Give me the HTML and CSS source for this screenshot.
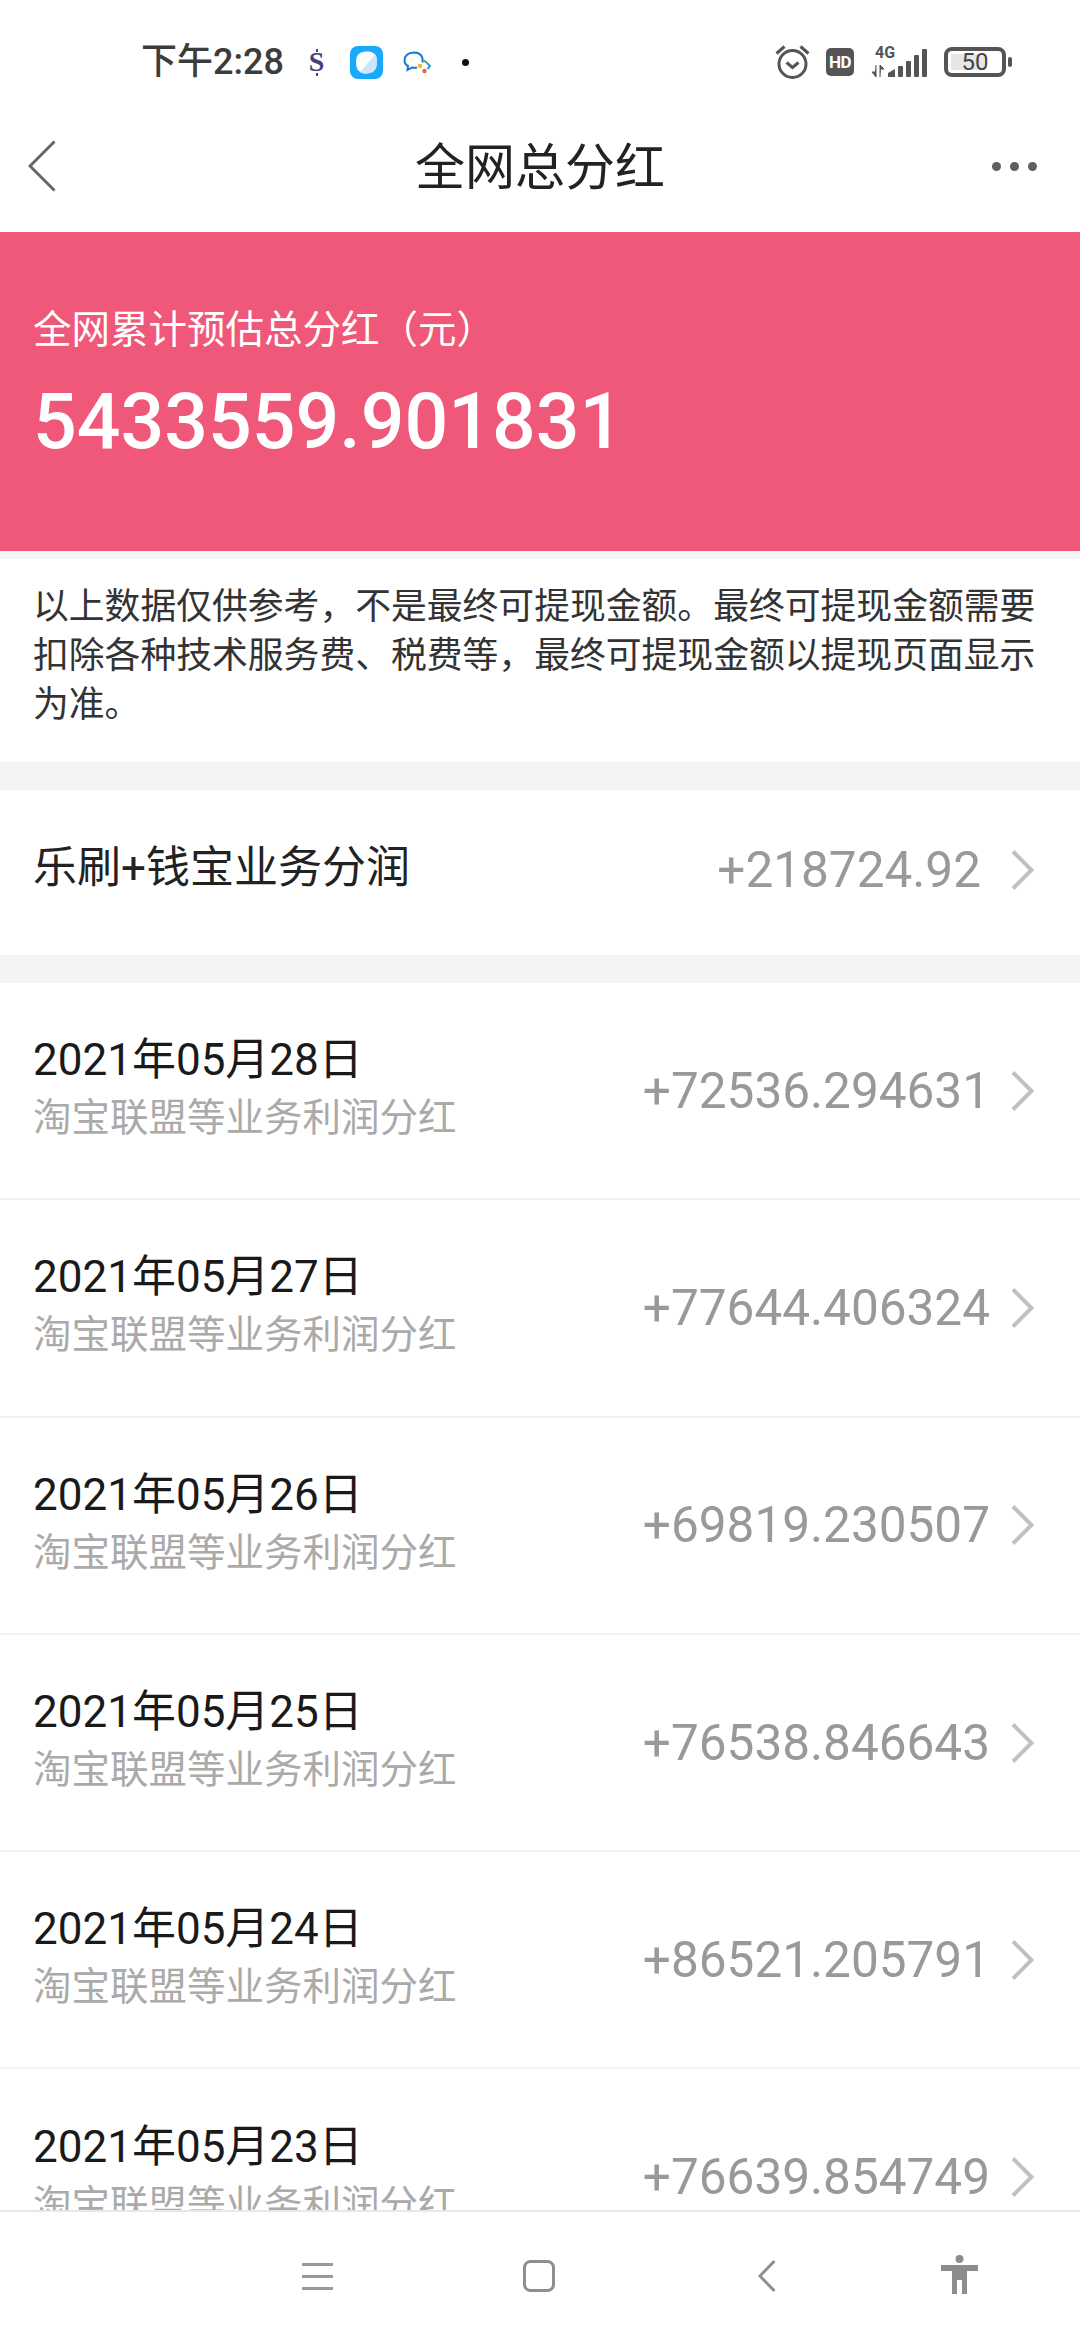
FILE: index.html
```html
<!DOCTYPE html>
<html lang="zh-CN">
<head>
<meta charset="utf-8">
<title>全网总分红</title>
<link rel="stylesheet" href="styles.css">
</head>
<body>
<div class="phone">
  <header class="status">
    <span class="time">下午2:28</span>
    <span class="dollar">S</span>
    <svg class="app" width="33" height="33" viewBox="0 0 33 33"><rect width="33" height="33" rx="8" fill="#18a8fc"/><path d="M16.5 5.5C23.5 5.5 27 8 27 15.500C27 24 23 27.500 16 27.500C9 27.500 6 23.500 6 16C6 9 9.500 5.500 16.500 5.500Z" fill="#fff"/><path d="M25 8.500C27 11 27 13 27 15.500C27 24 23 27.500 16 27.500C13.500 27.500 11.500 27 10 26Z" fill="#c9e6fb"/></svg>
    <svg class="chat" width="28" height="23" viewBox="0 0 28 23"><path d="M19.500 11.500C20.500 4 16 1.500 11 1.500C5 1.500 1.500 5 1.500 9.500C1.500 12 3 14 5 15L4.500 19L9 16.500C11 17 12.500 17 14 16.500" fill="none" stroke="#1673d2" stroke-width="2"/><path d="M21 9.500L24 12" fill="none" stroke="#4aa84e" stroke-width="2"/><circle cx="17" cy="15" r="2.200" fill="#f6b52a"/><circle cx="21.500" cy="20" r="2.200" fill="#ea6a2c"/><path d="M24 12L27 15L24.500 18" fill="none" stroke="#2a9ae0" stroke-width="2"/></svg>
    <span class="dot"></span>
    <div class="status-right">
      <svg class="alarm" width="35" height="34" viewBox="0 0 35 34"><circle cx="17.500" cy="19" r="13.500" fill="none" stroke="#555" stroke-width="3"/><path d="M11.500 17.500L17.500 22.500L23.500 17.500" fill="none" stroke="#555" stroke-width="3"/><path d="M1.500 8.500L9.500 1.500M25.500 1.500L33.500 8.500" fill="none" stroke="#555" stroke-width="3"/></svg>
      <span class="hd">HD</span>
      <svg class="net" width="57" height="40" viewBox="0 -4 57 40"><text x="4" y="11.500" class="net-label">4G</text><path d="M5 19V31L1 26H4M9 31V19L13 23H10" fill="#555" stroke="#555" stroke-width="1"/><path d="M17 31V27L24 23V31Z" fill="#555"/><rect x="27" y="20" width="5" height="11" rx="1" fill="#555"/><rect x="35" y="15" width="5" height="16" rx="1" fill="#555"/><rect x="43" y="9" width="5" height="22" rx="1" fill="#555"/><rect x="51" y="3" width="5" height="28" rx="1" fill="#555"/></svg>
      <div class="battery"><span class="batt-fill"></span><span class="batt-num">50</span></div>
      <span class="batt-nub"></span>
    </div>
  </header>

  <nav class="nav">
    <svg class="back" width="28" height="52" viewBox="0 0 28 52"><path d="M26.500 1.500L2 26L26.500 50.500" fill="none" stroke="#666" stroke-width="3"/></svg>
    <h1 class="title">全网总分红</h1>
    <div class="more"><i></i><i></i><i></i></div>
  </nav>

  <main class="content">
    <section class="hero">
      <p class="hero-label">全网累计预估总分红（元）</p>
      <p class="hero-num">5433559.901831</p>
    </section>
    <p class="notice">以上数据仅供参考，不是最终可提现金额。最终可提现金额需要扣除各种技术服务费、税费等，最终可提现金额以提现页面显示为准。</p>
    <a class="biz">
      <span class="biz-label">乐刷+钱宝业务分润</span>
      <span class="biz-value">+218724.92</span>
      <svg class="chev" width="23" height="40" viewBox="0 0 23 40"><path d="M2 1.500L20.500 20L2 38.500" fill="none" stroke="#c0c0c0" stroke-width="4"/></svg>
    </a>
    <ul class="list">
      <li class="row"><div class="row-text"><div class="date">2021年05月28日</div><div class="sub">淘宝联盟等业务利润分红</div></div><span class="value">+72536.294631</span><svg class="chev" width="23" height="40" viewBox="0 0 23 40"><path d="M2 1.500L20.500 20L2 38.500" fill="none" stroke="#c0c0c0" stroke-width="4"/></svg></li>
      <li class="row"><div class="row-text"><div class="date">2021年05月27日</div><div class="sub">淘宝联盟等业务利润分红</div></div><span class="value">+77644.406324</span><svg class="chev" width="23" height="40" viewBox="0 0 23 40"><path d="M2 1.500L20.500 20L2 38.500" fill="none" stroke="#c0c0c0" stroke-width="4"/></svg></li>
      <li class="row"><div class="row-text"><div class="date">2021年05月26日</div><div class="sub">淘宝联盟等业务利润分红</div></div><span class="value">+69819.230507</span><svg class="chev" width="23" height="40" viewBox="0 0 23 40"><path d="M2 1.500L20.500 20L2 38.500" fill="none" stroke="#c0c0c0" stroke-width="4"/></svg></li>
      <li class="row"><div class="row-text"><div class="date">2021年05月25日</div><div class="sub">淘宝联盟等业务利润分红</div></div><span class="value">+76538.846643</span><svg class="chev" width="23" height="40" viewBox="0 0 23 40"><path d="M2 1.500L20.500 20L2 38.500" fill="none" stroke="#c0c0c0" stroke-width="4"/></svg></li>
      <li class="row"><div class="row-text"><div class="date">2021年05月24日</div><div class="sub">淘宝联盟等业务利润分红</div></div><span class="value">+86521.205791</span><svg class="chev" width="23" height="40" viewBox="0 0 23 40"><path d="M2 1.500L20.500 20L2 38.500" fill="none" stroke="#c0c0c0" stroke-width="4"/></svg></li>
      <li class="row"><div class="row-text"><div class="date">2021年05月23日</div><div class="sub">淘宝联盟等业务利润分红</div></div><span class="value">+76639.854749</span><svg class="chev" width="23" height="40" viewBox="0 0 23 40"><path d="M2 1.500L20.500 20L2 38.500" fill="none" stroke="#c0c0c0" stroke-width="4"/></svg></li>
    </ul>
  </main>

  <footer class="sysnav">
    <svg class="sys-menu" width="31" height="27" viewBox="0 0 31 27"><path d="M0 1.500H31M0 13.500H31M0 25.500H31" stroke="#999" stroke-width="3"/></svg>
    <svg class="sys-home" width="32" height="32" viewBox="0 0 32 32"><rect x="1.500" y="1.500" width="29" height="29" rx="6" fill="none" stroke="#8f8f8f" stroke-width="3"/></svg>
    <svg class="sys-back" width="18" height="32" viewBox="0 0 18 32"><path d="M16.500 1L2 16L16.500 31" fill="none" stroke="#8f8f8f" stroke-width="3"/></svg>
    <svg class="sys-person" width="37" height="39" viewBox="0 0 37 39"><circle cx="18.500" cy="4" r="4" fill="#8c8c8c"/><path d="M0 10H37V16H26V39H21V25H16V39H11V16H0Z" fill="#8c8c8c"/></svg>
  </footer>
</div>
</body>
</html>
```
FILE: styles.css
```css
* { box-sizing: border-box; }
html, body { margin: 0; padding: 0; }
body { font-family: Roboto, "Noto Sans CJK SC", sans-serif; background: #fff; }
p, h1, ul { margin: 0; padding: 0; }
li { list-style: none; }

.phone { width: 1080px; height: 2340px; display: flex; flex-direction: column; overflow: hidden; background: #fff; }

.status { height: 90px; padding: 34px 68px 0 141px; display: flex; align-items: center; flex-shrink: 0; }
.time { font-size: 36px; font-weight: 500; color: #3c3c3c; width: 141px; white-space: nowrap; line-height: 56px; }
.dollar { position: relative; font-family: "Liberation Serif", serif; font-size: 28px; line-height: 28px; font-weight: 700; color: #47407a; margin-left: 25px; width: 19px; text-align: center; }
.dollar::before, .dollar::after { content: ""; position: absolute; left: 9px; width: 2px; height: 3px; background: #47407a; }
.dollar::before { top: 1px; }
.dollar::after { bottom: 0; }
.app { margin-left: 24px; }
.chat { margin-left: 20px; }
.dot { width: 7px; height: 7px; border-radius: 50%; background: #111; margin-left: 31px; }
.status-right { margin-left: auto; display: flex; align-items: center; }
.hd { width: 28px; height: 28px; border-radius: 5px; background: #555; color: #fff; font-size: 17px; font-weight: 700; line-height: 28px; text-align: center; margin-left: 16px; letter-spacing: -0.5px; }
.net { margin-left: 17px; }
.net-label { font-family: Roboto, sans-serif; font-size: 16px; font-weight: 700; fill: #555; }
.battery { position: relative; width: 62px; height: 30px; margin-left: 16px; border: 4px solid #555; border-radius: 8px; display: flex; align-items: center; justify-content: center; }
.batt-fill { position: absolute; left: 3px; top: 3px; bottom: 3px; width: 33px; background: #e6e6e6; }
.batt-num { position: relative; font-size: 24px; color: #444; line-height: 22px; }
.batt-nub { width: 4px; height: 10px; border-radius: 2px; background: #555; margin-left: 2px; }

.nav { height: 142px; padding: 10px 28px 0; display: grid; grid-template-columns: 1fr auto 1fr; align-items: center; flex-shrink: 0; }
.title { font-size: 50px; font-weight: 400; color: #222; line-height: 60px; margin-top: 3px; }
.more { justify-self: end; display: flex; gap: 9px; margin-right: 15px; }
.more i { width: 9px; height: 9px; border-radius: 50%; background: #5f5f5f; display: block; }

.content { flex: 1; min-height: 0; overflow: hidden; background: #f4f4f4; }
.hero { height: 319px; background: #ef5879; padding: 73px 33px 0; color: #fff; }
.hero-label { font-size: 38.500px; line-height: 50px; }
.hero-num { margin-top: 22px; font-size: 77px; font-weight: 500; line-height: 90px; }

.notice { margin-top: 8px; height: 203px; background: #fff; padding: 24px 33px 0; font-size: 35.800px; line-height: 49px; color: #333; }

.biz { margin-top: 28px; height: 165px; padding: 0 46px 6px 33px; background: #fff; display: flex; align-items: center; }
.biz-label { font-size: 44px; color: #222; line-height: 60px; margin-bottom: 4px; }
.biz-value { margin-left: auto; margin-right: 30px; font-size: 49.500px; color: #999; }

.list { margin-top: 28px; background: #fff; }
.row { height: 217.3px; padding: 0 46px 0 33px; display: flex; align-items: center; border-bottom: 2px solid #f2f2f2; }
.row-text { flex: 1; padding-bottom: 3px; }
.date { font-size: 44px; line-height: 57px; color: #1a1a1a; }
.sub { font-size: 38.500px; line-height: 57px; color: #aaa; }
.value { font-size: 49.500px; color: #999; margin-right: 21px; }
.chev { flex-shrink: 0; }

.sysnav { height: 130px; flex-shrink: 0; background: #fff; border-top: 2px solid #e8e8e8; padding-left: 302px; display: flex; align-items: center; }
.sys-home { margin-left: 190px; }
.sys-back { margin-left: 203px; }
.sys-person { margin-left: 165px; margin-bottom: 4px; }
```
